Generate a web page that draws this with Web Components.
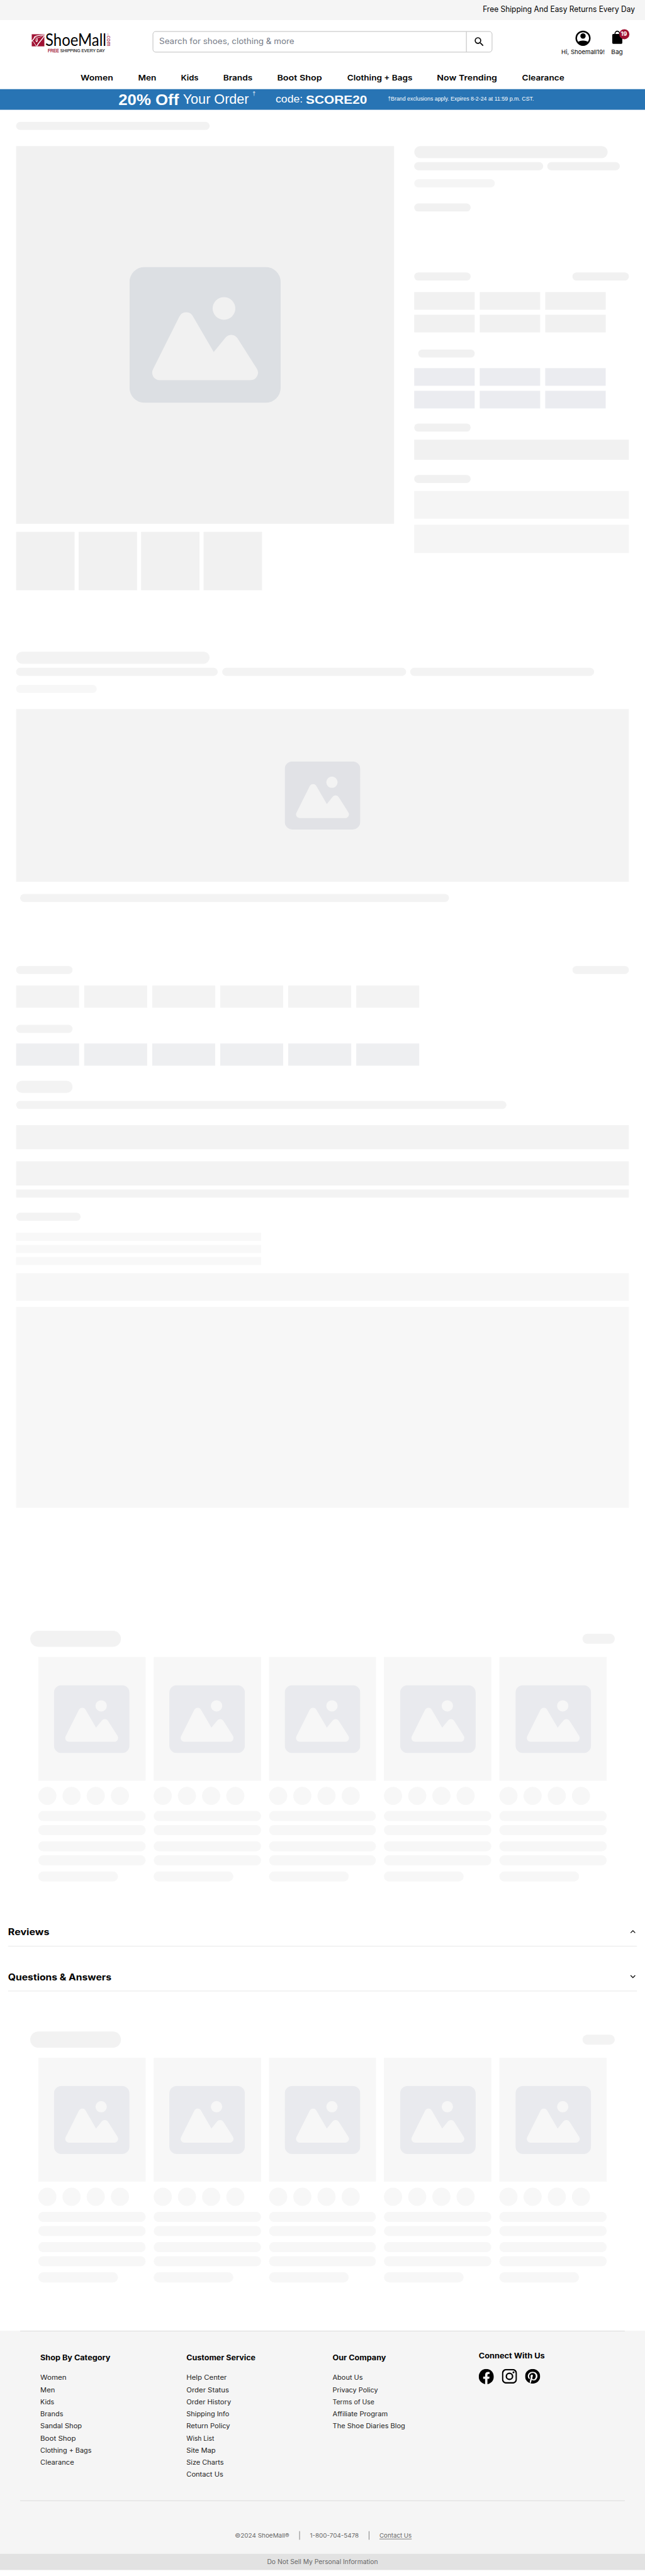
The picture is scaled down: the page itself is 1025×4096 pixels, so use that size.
<!DOCTYPE html>
<html lang="en">
<head>
<meta charset="utf-8">
<title>ShoeMall</title>
<style>
html,body{margin:0;padding:0;background:#fff;overflow:hidden}
body{width:1025px;height:4096px;font-family:Inter,"Open Sans",sans-serif;color:#000}
</style>
</head>
<body>
<shoe-page></shoe-page>
<script>
const FONT = 'Inter, "Open Sans", sans-serif';
const pen = document.createElement('canvas').getContext('2d');
function define(name, html) {
  customElements.define(name, class extends HTMLElement {
    constructor() {
      super();
      this.attachShadow({mode: 'open'}).innerHTML = typeof html === 'function' ? html(this) : html;
    }
  });
}

/* Text set to a given measure: w = width, s = size, b = weight, l = line height */
customElements.define('fit-text', class extends HTMLElement {
  connectedCallback() {
    if (this.shadowRoot) return;
    const g = (k, d) => +(this.getAttribute(k) || d);
    const s = g('s', 16), b = g('b', 400), w = g('w', 0), l = g('l', s * 1.25);
    const t = this.getAttribute('t');
    pen.font = `${b} ${s}px ${FONT}`;
    const k = w / pen.measureText(t).width;
    this.attachShadow({mode: 'open'}).innerHTML =
      `<style>:host{display:block;flex:none;width:${w}px;height:${l}px;white-space:nowrap;font:${b} ${s}px/${l}px ${FONT}}span{display:inline-block;transform:scaleX(${k.toFixed(4)});transform-origin:0 0}:host(.u) span{text-decoration:underline;text-underline-offset:2px}</style><span></span>`;
    this.shadowRoot.querySelector('span').textContent = t;
  }
});

/* Skeleton bar: w, h, r = radius, c = colour, t = top margin, x = left margin */
customElements.define('sk-bar', class extends HTMLElement {
  connectedCallback() {
    if (this.shadowRoot) return;
    const g = (k, d) => this.getAttribute(k) ?? d;
    const w = g('w', '');
    this.attachShadow({mode: 'open'}).innerHTML =
      `<style>:host{display:flex;flex:none;align-items:center;justify-content:center;width:${w ? w + 'px' : 'auto'};height:${g('h', 16)}px;border-radius:${g('r', 0)}px;background:${g('c', '#f2f2f2')};margin:${g('t', 0)}px 0 0 ${g('x', 0)}px}</style><slot></slot>`;
  }
});

define('picture-icon', `<style>:host{display:block;width:150px;height:135px;color:#e9eaee}svg{display:block;width:100%;height:100%}</style>
<svg viewBox="0 0 20 18" fill="currentColor"><path d="M18 0H2a2 2 0 0 0-2 2v14a2 2 0 0 0 2 2h16a2 2 0 0 0 2-2V2a2 2 0 0 0-2-2Zm-5.5 4a1.5 1.5 0 1 1 0 3 1.5 1.5 0 0 1 0-3Zm4.376 10.481A1 1 0 0 1 16 15H4a1 1 0 0 1-.895-1.447l3.5-7A1 1 0 0 1 7.468 6a.965.965 0 0 1 .9.5l2.775 4.757 1.546-1.887a1 1 0 0 1 1.618.1l2.541 4a1 1 0 0 1 .028 1.011Z"/></svg>`);

define('shoe-logo', `<style>:host{display:block;width:158px;height:42px}svg{display:block;overflow:visible}</style>
<svg width="158" height="42" viewBox="0 0 158 42">
<rect x="0" y="2" width="25" height="24" fill="#a01233"/>
<g fill="none" stroke="#fff" stroke-linecap="round"><path d="M0 15.500C3 13 5 12 5.500 7.500C9 5 14 4 24 3.500" stroke-width="1.700"/><path d="M24.500 5.500C21 13 15 16 10.500 25" stroke-width="1.800"/><path d="M0 14.500C4 16 5 20 9 25.500" stroke-width="1.200"/><path d="M8.500 12.500C7.500 14 8.500 15.500 9.500 17M10.500 10.500C11.500 12.500 11.500 14.500 10.500 16.500" stroke-width="1.500"/><path d="M5 8.500C8 11 17 8.500 22 4.500" stroke-width=".9"/></g>
<text x="27" y="25.700" font-family="Lato,sans-serif" font-size="33.500" textLength="121" lengthAdjust="spacingAndGlyphs" fill="#000">ShoeMall</text>
<text transform="translate(149.300 5) rotate(90)" font-family="Lato,sans-serif" font-size="12" textLength="21" lengthAdjust="spacingAndGlyphs" fill="#a01233">com</text>
<circle cx="151" cy="2.200" r="1.500" fill="none" stroke="#c98a99" stroke-width=".6"/>
<g font-family="Liberation Sans,sans-serif" font-size="9"><text x="32" y="37.700" fill="#a01233" stroke="#a01233" stroke-width=".35" textLength="22" lengthAdjust="spacingAndGlyphs">FREE</text><text x="56.700" y="37.700" fill="#111" stroke="#111" stroke-width=".2" textLength="88.500" lengthAdjust="spacingAndGlyphs">SHIPPING EVERY DAY</text></g>
</svg>`);

define('search-box', `<style>:host{display:flex;box-sizing:border-box;width:674px;height:42px;border:1px solid #aeaeae;border-radius:6px;color:#757b87}
.f{flex:1;padding:0 0 0 12px}.b{width:50px;border-left:1px solid #aeaeae;display:flex;align-items:center;justify-content:center}</style>
<div class="f"><fit-text t="Search for shoes, clothing &amp; more" w="268" s="15.500" l="39"></fit-text></div>
<div class="b"><svg width="24" height="24" viewBox="0 0 24 24" fill="#000"><path d="M15.500 14h-.79l-.28-.27A6.470 6.470 0 0 0 16 9.500 6.500 6.500 0 1 0 9.500 16c1.610 0 3.090-.59 4.230-1.570l.27.28v.79l5 4.990L20.490 19l-4.990-5zm-6 0C7.010 14 5 11.990 5 9.500S7.010 5 9.500 5 14 7.010 14 9.500 11.990 14 9.500 14z"/></svg></div>`);

define('account-links', `<style>:host{display:flex;gap:13px}.c{display:flex;flex-direction:column;align-items:center}.i{height:36px;display:flex;align-items:center;position:relative}svg{display:block}
.n{position:absolute;left:15px;top:0;width:20px;height:20px;border-radius:50%;background:#a01233;color:#fff;display:flex;justify-content:center}</style>
<div class="c"><div class="i"><svg width="36" height="36" viewBox="0 0 24 24"><circle cx="12" cy="12" r="9" fill="none" stroke="#000" stroke-width="2"/><circle cx="12" cy="9" r="3.500"/><path d="M4.500 17.600C6 15.900 9 15 12 15s6 .9 7.500 2.600C18 20.200 15 22 12 22s-6-1.800-7.500-4.400z"/></svg></div><fit-text t="Hi, Shoemall19!" w="86" s="11.500" l="18"></fit-text></div>
<div class="c"><div class="i"><svg width="22" height="36" viewBox="0 0 22 36"><path d="M6.500 10V8.500a4.500 4.500 0 0 1 9 0V10" fill="none" stroke="#000" stroke-width="2"/><rect x="1" y="9.500" width="20" height="19.500" rx="2"/></svg><div class="n"><fit-text t="19" w="12.500" s="11.800" b="700" l="18"></fit-text></div></div><fit-text t="Bag" w="23" s="11.500" l="18"></fit-text></div>`);

const nav = [['Women',64.5],['Men',36],['Kids',35],['Brands',58],['Boot Shop',89],['Clothing + Bags',129.5],['Now Trending',119.5],['Clearance',84]];
define('site-header', `<style>:host{display:block;height:177px}
.top{height:40px;background:#f5f5f5;display:flex;justify-content:flex-end;padding-right:20px}
.mid{height:97px;display:flex;align-items:flex-start}
shoe-logo{margin:26px 0 0 63px}search-box{margin:22px 0 0 82px}account-links{margin:18px 0 0 137px}
nav{display:flex;justify-content:space-between;margin:0 160px}</style>
<div class="top"><fit-text t="Free Shipping And Easy Returns Every Day" w="302" s="15.500" l="37"></fit-text></div>
<div class="mid"><shoe-logo></shoe-logo><search-box></search-box><account-links></account-links></div>
<nav>${nav.map(n => `<fit-text t="${n[0]}" w="${n[1]}" s="15.500" b="600" l="35"></fit-text>`).join('')}</nav>`);

define('promo-banner', `<style>:host{display:block;height:41px;background:#2874b4}svg{display:block;overflow:visible}</style>
<svg width="1280" height="41" fill="#fff" font-family="Liberation Sans,sans-serif">
<text x="235" y="31" font-size="29" font-weight="700" textLength="120" lengthAdjust="spacingAndGlyphs">20% Off</text>
<text x="363" y="29" font-size="27" textLength="131" lengthAdjust="spacingAndGlyphs">Your Order</text>
<text x="501" y="12.500" font-size="11">†</text>
<text x="547" y="27" font-size="21.500" textLength="54" lengthAdjust="spacingAndGlyphs">code:</text>
<text x="607" y="29.500" font-size="24" font-weight="700" textLength="121.500" lengthAdjust="spacingAndGlyphs">SCORE20</text>
<text x="769.500" y="23" font-size="11.200" textLength="290" lengthAdjust="spacingAndGlyphs">†Brand exclusions apply. Expires 8-2-24 at 11:59 p.m. CST.</text></svg>`);

const rep = (n, s) => Array(n).fill(s).join('');
define('product-skeleton', `<style>:host{display:block;height:1076px;box-sizing:border-box;padding:24px 32px 0}
.cols{display:flex;margin-top:32px;gap:40px}.l{width:750px}.r{width:426px}
.th{display:flex;gap:8px;margin-top:16px}.row{display:flex;gap:8px}.sp{justify-content:space-between}
.g{display:grid;grid-template-columns:repeat(3,120px);gap:10px}picture-icon{width:300px;height:270px;color:#dcdfe3}</style>
<sk-bar w="384" r="8"></sk-bar>
<div class="cols"><div class="l"><sk-bar h="750" c="#f1f1f1"><picture-icon></picture-icon></sk-bar><div class="th">${rep(4, '<sk-bar w="116" h="116" c="#f1f1f1"></sk-bar>')}</div></div>
<div class="r"><sk-bar w="384" h="24" r="12" c="#f1f1f1"></sk-bar>
<div class="row"><sk-bar w="256" r="8" t="8" c="#f1f1f1"></sk-bar><sk-bar w="144" r="8" t="8" c="#f1f1f1"></sk-bar></div>
<sk-bar w="160" r="8" t="18" c="#f5f5f5"></sk-bar><sk-bar w="112" r="8" t="32" c="#f1f1f1"></sk-bar>
<div class="row sp"><sk-bar w="112" r="8" t="121" c="#f1f1f1"></sk-bar><sk-bar w="112" r="8" t="121" c="#f1f1f1"></sk-bar></div>
<div class="g" style="margin-top:23px">${rep(6, '<sk-bar w="120" h="35" c="#f1f1f1"></sk-bar>')}</div>
<sk-bar w="112" r="8" t="34" x="8" c="#f1f1f1"></sk-bar>
<div class="g" style="margin-top:21px">${rep(6, '<sk-bar w="120" h="35" c="#ebecf0"></sk-bar>')}</div>
<sk-bar w="112" r="8" t="30" c="#f1f1f1"></sk-bar><sk-bar h="40" t="16" c="#f1f1f1"></sk-bar>
<sk-bar w="112" r="8" t="30" c="#f1f1f1"></sk-bar><sk-bar h="55" t="16" c="#f5f5f5"></sk-bar><sk-bar h="56" t="12" c="#f5f5f5"></sk-bar></div></div>`);

define('detail-skeleton', `<style>:host{display:block;height:1944px;box-sizing:border-box;padding:0 32px}
.row{display:flex;gap:8.500px}.sp{justify-content:space-between}.g{display:flex;gap:10px}picture-icon{color:#e1e2e6}</style>
<sk-bar w="384" h="24" r="12" c="#f3f3f3"></sk-bar>
<div class="row"><sk-bar w="400" t="8" r="8" c="#f3f3f3"></sk-bar><sk-bar w="365" t="8" r="8" c="#f3f3f3"></sk-bar><sk-bar w="365" t="8" r="8" c="#f3f3f3"></sk-bar></div>
<sk-bar w="160" r="8" t="18" c="#f7f7f7"></sk-bar>
<sk-bar h="343" t="32" c="#f3f3f3"><picture-icon></picture-icon></sk-bar>
<sk-bar w="851" r="8" t="24" x="8" c="#f3f3f3"></sk-bar>
<div class="row sp"><sk-bar w="112" r="8" t="127" c="#f3f3f3"></sk-bar><sk-bar w="112" r="8" t="127" c="#f3f3f3"></sk-bar></div>
<div class="g">${rep(6, '<sk-bar w="125" h="44" t="23" c="#f3f3f3"></sk-bar>')}</div>
<sk-bar w="112" r="8" t="34" c="#f3f3f3"></sk-bar>
<div class="g">${rep(6, '<sk-bar w="125" h="44" t="21" c="#eeeff1"></sk-bar>')}</div>
<sk-bar w="112" h="24" r="12" t="30" c="#f3f3f3"></sk-bar><sk-bar w="973" r="8" t="16" c="#f3f3f3"></sk-bar>
<sk-bar h="48" t="32" c="#f3f3f3"></sk-bar><sk-bar h="48" t="24" c="#f3f3f3"></sk-bar><sk-bar h="16" t="8" c="#f3f3f3"></sk-bar>
<sk-bar w="128" r="8" t="30" c="#f3f3f3"></sk-bar>
<sk-bar w="486" t="24" c="#f8f8f8"></sk-bar><sk-bar w="486" t="8" c="#f8f8f8"></sk-bar><sk-bar w="486" t="8" c="#f8f8f8"></sk-bar>
<sk-bar h="55" t="16" c="#f7f7f7"></sk-bar><sk-bar h="399" t="12" c="#f7f7f7"></sk-bar>`);

const bar = (t, w) => `<sk-bar ${w ? `w="${w}"` : ''} h="20" r="10" t="${t}" c="#f7f7f7"></sk-bar>`;
define('carousel-skeleton', `<style>:host{display:block;height:498px}.h{display:flex;justify-content:space-between;align-items:center;margin:0 60px}
.g{display:grid;grid-template-columns:repeat(5,1fr);gap:16px;margin:20px 76px 0}.d{display:flex;gap:12px}</style>
<div class="h"><sk-bar w="180" h="32" r="16"></sk-bar><sk-bar w="64" h="20" r="10" c="#f3f3f3"></sk-bar></div>
<div class="g">${rep(5, `<div><sk-bar h="246" c="#f7f7f7"><picture-icon></picture-icon></sk-bar><div class="d">${rep(4, '<sk-bar w="36" h="36" r="18" t="12" c="#f7f7f7"></sk-bar>')}</div>${bar(12)}${bar(8)}${bar(12)}${bar(8)}${bar(12, 158)}</div>`)}</div>`);

define('fold-row', el => `<style>:host{display:flex;justify-content:space-between;align-items:center;box-sizing:border-box;margin:0 16px;height:60px;padding-top:3px;border-bottom:1px solid #e2e2e2}svg{margin-right:2px}</style>
<fit-text t="${el.getAttribute('t').replace('&', '&amp;')}" w="${el.getAttribute('w')}" s="17.500" b="700" l="27"></fit-text>
<svg width="12" height="12" fill="none" stroke="#000" stroke-width="1.600"><path d="${el.hasAttribute('open') ? 'M1.500 8L6 3.500l4.500 4.500' : 'M1.500 3.500L6 8l4.500-4.500'}"/></svg>`);

const cols = [
 ['Shop By Category',139,[['Women',52],['Men',29],['Kids',27.5],['Brands',45.5],['Sandal Shop',82.5],['Boot Shop',70.5],['Clothing + Bags',101.5],['Clearance',67]]],
 ['Customer Service',137,[['Help Center',80],['Order Status',84.5],['Order History',88.5],['Shipping Info',85],['Return Policy',86.5],['Wish List',55],['Site Map',58],['Size Charts',74],['Contact Us',73]]],
 ['Our Company',106,[['About Us',60],['Privacy Policy',90],['Terms of Use',83],['Affiliate Program',109.5],['The Shoe Diaries Blog',144]]]];
define('social-icons', `<style>:host{display:flex;gap:16px}svg{display:block}</style>
<svg width="30" height="30" viewBox="0 0 24 24"><path d="M24 12.070C24 5.400 18.630 0 12 0S0 5.400 0 12.070C0 18.100 4.390 23.100 10.130 24v-8.440H7.080v-3.490h3.050V9.410c0-3.020 1.790-4.690 4.530-4.690 1.310 0 2.680.24 2.680.24v2.970h-1.510c-1.490 0-1.960.93-1.960 1.890v2.250h3.330l-.53 3.490h-2.800V24C19.610 23.100 24 18.100 24 12.070"/></svg>
<svg width="30" height="29" viewBox="0 0 30 29" fill="none" stroke="#000" stroke-width="2.800"><rect x="1.400" y="1.400" width="27.200" height="26.200" rx="7"/><circle cx="15" cy="14.500" r="6.200"/><circle cx="23" cy="6.800" r="1.800" fill="#000" stroke="none"/></svg>
<svg width="30" height="29" viewBox="0 0 24 24" preserveAspectRatio="none"><path d="M12 0C5.370 0 0 5.370 0 12c0 5.080 3.160 9.420 7.630 11.170-.11-.95-.2-2.400.04-3.440.22-.94 1.410-5.960 1.410-5.960s-.36-.72-.36-1.780c0-1.670.97-2.910 2.170-2.910 1.020 0 1.520.77 1.520 1.690 0 1.030-.66 2.570-1 3.990-.28 1.200.6 2.170 1.780 2.170 2.130 0 3.770-2.250 3.770-5.490 0-2.870-2.060-4.880-5.010-4.880-3.410 0-5.410 2.560-5.410 5.200 0 1.030.4 2.130.89 2.740.1.120.11.220.08.340l-.33 1.360c-.05.22-.17.270-.4.160-1.500-.7-2.430-2.890-2.430-4.650 0-3.780 2.750-7.260 7.930-7.260 4.160 0 7.400 2.970 7.400 6.930 0 4.140-2.610 7.460-6.230 7.460-1.210 0-2.360-.63-2.750-1.380l-.75 2.850c-.27 1.040-1 2.350-1.490 3.150 1.120.35 2.310.53 3.550.53 6.630 0 12-5.370 12-12S18.630 0 12 0z"/></svg>`);

define('site-footer', `<style>:host{display:block;height:475px;background:#f5f5f5}
.m{margin:0 40px;box-sizing:border-box;height:338px;border:1px solid #d6d6d6;border-width:1px 0;padding:43px 0 0 40px;display:flex}
.c{width:290px;flex:none;color:#000}.c section{margin-top:18px;color:#1a1a1a}.k fit-text{margin-top:-4px}.k social-icons{margin-top:16px}
.y{height:105px;box-sizing:border-box;padding:60px 0 0 465.500px;display:flex;gap:20px;color:#666}.y fit-text{margin-top:.5px}.y i{width:1px;height:17px;background:#666}
.p{height:32px;background:#e2e2e2;color:#666;display:flex;justify-content:center}</style>
<div class="m">${cols.map(c => `<div class="c"><fit-text t="${c[0]}" w="${c[1]}" s="13.800" b="700" l="20"></fit-text><section>${c[2].map(i => `<fit-text t="${i[0]}" w="${i[1]}" s="12.500" l="24"></fit-text>`).join('')}</section></div>`).join('')}
<div class="c k"><fit-text t="Connect With Us" w="131" s="13.800" b="700" l="20"></fit-text><social-icons></social-icons></div></div>
<div class="y"><fit-text t="©2024 ShoeMall®" w="108" s="11.500" l="16"></fit-text><i></i><fit-text t="1-800-704-5478" w="97" s="11.500" l="16"></fit-text><i></i><fit-text class="u" t="Contact Us" w="64" s="11.500" l="16"></fit-text></div>
<div class="p"><fit-text t="Do Not Sell My Personal Information" w="220" s="12.500" l="31"></fit-text></div>`);

define('shoe-page', `<style>:host{display:block;width:1025px;height:4096px;overflow:hidden;contain:strict}main{display:flex;flex-direction:column;width:1280px;height:5114px;transform:scale(.80078);transform-origin:0 0}</style>
<main><site-header></site-header><promo-banner></promo-banner><product-skeleton></product-skeleton><detail-skeleton></detail-skeleton>
<carousel-skeleton></carousel-skeleton>
<div style="height:69px"></div><fold-row t="Reviews" w="82" open></fold-row>
<div style="height:29px"></div><fold-row t="Questions &amp; Answers" w="205"></fold-row>
<div style="height:80px"></div><carousel-skeleton></carousel-skeleton>
<div style="height:96px"></div><site-footer></site-footer></main>`);
</script>
</body>
</html>
